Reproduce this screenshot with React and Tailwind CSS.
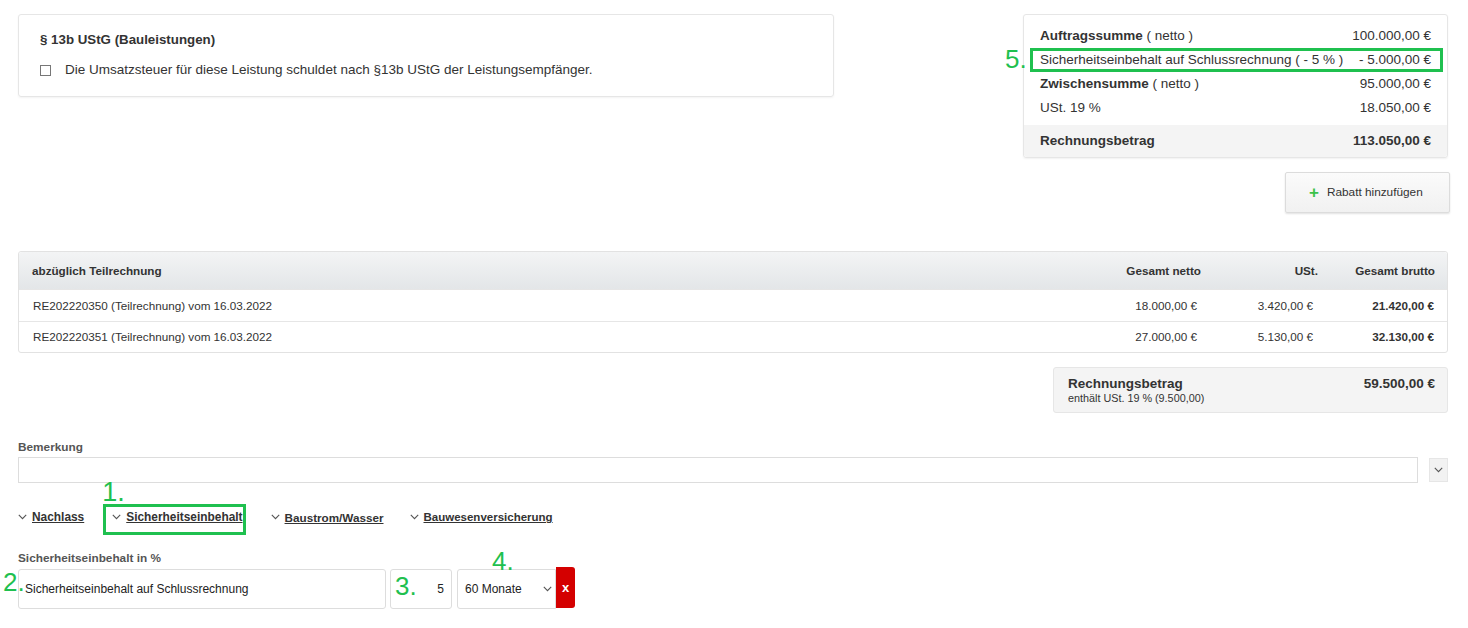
import React from "react";

const Chevron = ({ className = "" }) => (
  <svg width="9" height="6" viewBox="0 0 9 6" className={className} fill="none">
    <polyline points="0.8,0.8 4.5,4.6 8.2,0.8" stroke="#555" strokeWidth="1.1" />
  </svg>
);

const Tab = ({ label, size = "text-[11.9px]", children }) => (
  <div className="relative flex items-center h-[20px]">
    <Chevron className="mr-[5px] mt-[-2px]" />
    <span className={`${size} font-bold underline text-[#333]`}>{label}</span>
    {children}
  </div>
);

export default function App() {
  const green = "text-[#1fc04f]";
  return (
    <div
      className="min-h-[628px] bg-white text-[#333] pl-[18px] pr-[20px] pt-[14px]"
      style={{ fontFamily: '"Liberation Sans", Arial, sans-serif' }}
    >
      {/* top row */}
      <div className="flex justify-between items-start">
        <div className="w-[816px] h-[83px] border border-[#e6e6e6] rounded-[3px] shadow-[0_1px_2px_rgba(0,0,0,0.05)] px-[21px] pt-[17px]">
          <div className="text-[13.3px] font-bold leading-[16px] text-[#333]">§ 13b UStG (Bauleistungen)</div>
          <div className="flex items-center mt-[14px] leading-[16px]">
            <span className="w-[11px] h-[11px] border border-[#777] bg-white inline-block" />
            <span className="ml-[14px] text-[13.5px] text-[#333]">
              Die Umsatzsteuer für diese Leistung schuldet nach §13b UStG der Leistungsempfänger.
            </span>
          </div>
        </div>

        <div className="w-[425px] flex flex-col">
          <div className="relative border border-[#e6e6e6] rounded-[3px] shadow-[0_1px_2px_rgba(0,0,0,0.06)] pt-[9px] text-[13.5px]">
            <div className="flex justify-between h-[24px] items-center px-4 pr-[16px]">
              <span><b>Auftragssumme</b> ( netto )</span>
              <span>100.000,00 €</span>
            </div>
            <div className="flex justify-between h-[24px] items-center px-4 pr-[16px]">
              <span>Sicherheitseinbehalt auf Schlussrechnung ( - 5 % )</span>
              <span>- 5.000,00 €</span>
            </div>
            <div className="flex justify-between h-[24px] items-center px-4 pr-[16px]">
              <span><b>Zwischensumme</b> ( netto )</span>
              <span>95.000,00 €</span>
            </div>
            <div className="flex justify-between h-[24px] items-center px-4 pr-[16px]">
              <span>USt. 19 %</span>
              <span>18.050,00 €</span>
            </div>
            <div className="mt-[5px] h-[32px] bg-[#f4f4f4] flex justify-between items-center px-4 pr-[16px] font-bold rounded-b-[3px]">
              <span>Rechnungsbetrag</span>
              <span>113.050,00 €</span>
            </div>
            <div className="absolute left-[6px] right-[4px] top-[33px] h-[24px] border-[3px] border-[#1fc04f]" />
            <div className={`absolute left-[-19px] top-[29px] text-[26px] leading-[30px] ${green}`}>5.</div>
          </div>
          <div className="self-end mr-[-2px] mt-[14px] w-[165px] h-[41px] border border-[#dcdcdc] rounded-[2px] bg-gradient-to-b from-[#fbfbfb] to-[#f1f1f1] shadow-[0_1px_2px_rgba(0,0,0,0.12)] flex items-center pl-[23px] text-[11.8px] text-[#333]">
            <span className="text-[#3cc24a] text-[17px] font-bold leading-none mr-[8px] mt-[-1px]">+</span>
            Rabatt hinzufügen
          </div>
        </div>
      </div>

      {/* table */}
      <div className="mt-[38px] border border-[#e2e2e2] rounded-[3px] text-[11.7px]">
        <div className="grid grid-cols-[1fr_150px_117px_116px] h-[37px] items-center bg-gradient-to-b from-[#f3f4f5] to-[#e3e6e8] rounded-t-[3px] font-bold text-[#333]">
          <div className="pl-[13px]">abzüglich Teilrechnung</div>
          <div className="text-right pr-[13px]">Gesamt netto</div>
          <div className="text-right pr-[13px]">USt.</div>
          <div className="text-right pr-[12px]">Gesamt brutto</div>
        </div>
        <div className="grid grid-cols-[1fr_150px_117px_116px] h-[32px] items-center border-t border-[#e6e6e6]">
          <div className="pl-[14px]">RE202220350 (Teilrechnung) vom 16.03.2022</div>
          <div className="text-right pr-[17px]">18.000,00 €</div>
          <div className="text-right pr-[18px]">3.420,00 €</div>
          <div className="text-right pr-[13px] font-bold">21.420,00 €</div>
        </div>
        <div className="grid grid-cols-[1fr_150px_117px_116px] h-[31px] items-center border-t border-[#e6e6e6]">
          <div className="pl-[14px]">RE202220351 (Teilrechnung) vom 16.03.2022</div>
          <div className="text-right pr-[17px]">27.000,00 €</div>
          <div className="text-right pr-[18px]">5.130,00 €</div>
          <div className="text-right pr-[13px] font-bold">32.130,00 €</div>
        </div>
      </div>

      {/* Rechnungsbetrag box */}
      <div className="flex justify-end mt-[14px]">
        <div className="w-[395px] h-[46px] bg-[#f4f4f4] border border-[#e6e6e6] rounded-[3px] flex justify-between pl-[14px] pr-[12px] pt-[8px]">
          <div>
            <div className="text-[13.5px] font-bold leading-[16px]">Rechnungsbetrag</div>
            <div className="text-[10.8px] leading-[12px] text-[#333]">enthält USt. 19 % (9.500,00)</div>
          </div>
          <div className="text-[13.5px] font-bold leading-[16px]">59.500,00 €</div>
        </div>
      </div>

      {/* Bemerkung */}
      <div className="mt-[27px] text-[11.8px] font-bold text-[#555] leading-[14px]">Bemerkung</div>
      <div className="mt-[3px] flex items-center">
        <div className="flex-1 h-[26px] border border-[#dddddd] bg-white" />
        <div className="ml-[11px] w-[19px] h-[24px] bg-[#f2f2f2] border border-[#e6e6e6] flex items-center justify-center">
          <Chevron />
        </div>
      </div>

      {/* tabs */}
      <div className="mt-[25px] flex items-center">
        <Tab label="Nachlass" />
        <div className="ml-[28px]">
          <Tab label="Sicherheitseinbehalt">
            <div className="absolute left-[-9px] right-[-3px] top-[-4px] bottom-[-7px] border-[3px] border-[#1fc04f]" />
            <div className={`absolute left-[-10px] top-[-31px] text-[27px] leading-[30px] ${green}`}>1.</div>
          </Tab>
        </div>
        <div className="ml-[28px]">
          <Tab label="Baustrom/Wasser" size="text-[11.7px]" />
        </div>
        <div className="ml-[26px]">
          <Tab label="Bauwesenversicherung" size="text-[11.5px]" />
        </div>
      </div>

      {/* Sicherheitseinbehalt */}
      <div className="mt-[23px] text-[11.8px] font-bold text-[#555] leading-[14px]">Sicherheitseinbehalt in %</div>
      <div className="mt-[4px] flex items-start text-[12px] text-[#222]">
        <div className="relative w-[368px] h-[40px] border border-[#dddddd] rounded-[3px] flex items-center pl-[6px]">
          Sicherheitseinbehalt auf Schlussrechnung
          <div className={`absolute left-[-16px] top-[-3px] text-[26px] leading-[30px] ${green}`}>2.</div>
        </div>
        <div className="relative ml-[4px] w-[62px] h-[40px] border border-[#dddddd] rounded-[3px] flex items-center justify-end pr-[7px]">
          5
          <div className={`absolute left-[4px] top-[1px] text-[26px] leading-[30px] ${green}`}>3.</div>
        </div>
        <div className="relative ml-[5px] w-[99px] h-[40px] border border-[#dddddd] rounded-l-[3px] flex items-center justify-between pl-[7px] pr-[3px]">
          <span className="text-[#222]">60 Monate</span>
          <Chevron />
          <div className={`absolute left-[34px] top-[-24px] text-[26px] leading-[30px] ${green}`}>4.</div>
        </div>
        <div className="mt-[-2px] w-[19px] h-[41px] bg-[#d40000] rounded-r-[3px] flex items-center justify-center text-white font-bold text-[13px]">
          x
        </div>
      </div>
    </div>
  );
}
